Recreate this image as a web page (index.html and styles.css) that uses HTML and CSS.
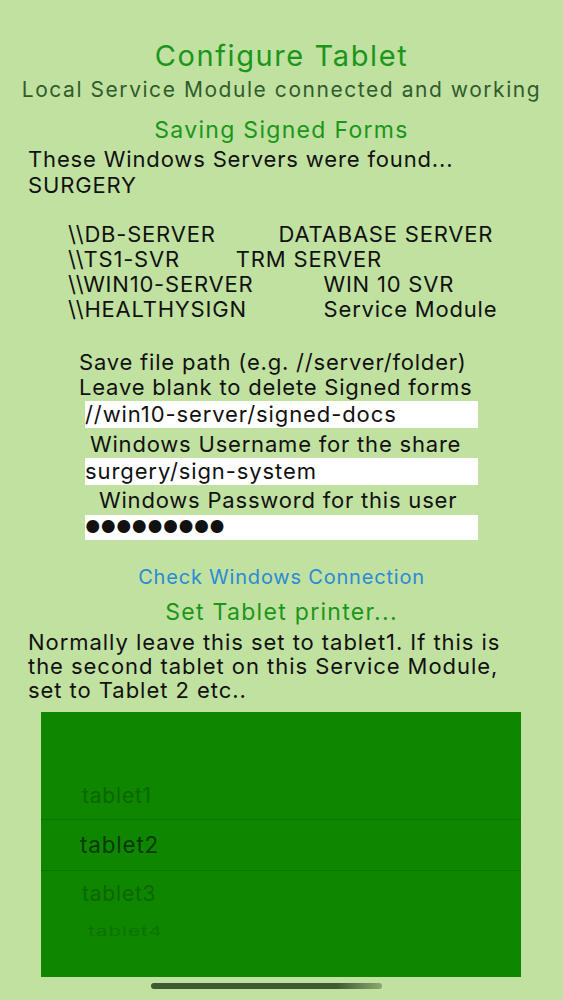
FILE: index.html
```html
<!DOCTYPE html>
<html lang="en">
<head>
    <meta charset="UTF-8">
    <meta name="viewport" content="width=device-width, initial-scale=1.0">
    <title>Configure Tablet</title>
    <link rel="stylesheet" href="styles.css">
</head>
<body>
  <div class="screen">
    <h1 class="title">Configure Tablet</h1>
    <p class="status">Local Service Module connected and working</p>

    <h2 class="section">Saving Signed Forms</h2>
    <p class="found">These Windows Servers were found...<br>SURGERY</p>

    <ul class="servers">
        <li>\\DB-SERVER         DATABASE SERVER</li>
        <li>\\TS1-SVR        TRM SERVER</li>
        <li>\\WIN10-SERVER          WIN 10 SVR</li>
        <li>\\HEALTHYSIGN           Service Module</li>
    </ul>

    <div class="share-form">
        <p class="label label-path">Save file path (e.g. //server/folder)<br>Leave blank to delete Signed forms</p>
        <div class="field">//win10-server/signed-docs</div>
        <p class="label label-user">Windows Username for the share</p>
        <div class="field">surgery/sign-system</div>
        <p class="label label-pass">Windows Password for this user</p>
        <div class="field field-pass">●●●●●●●●●</div>
    </div>

    <a class="check-link" href="#">Check Windows Connection</a>

    <h2 class="section section-printer">Set Tablet printer...</h2>
    <p class="note">Normally leave this set to tablet1. If this is<br>the second tablet on this Service Module,<br>set to Tablet 2 etc..</p>

    <div class="picker">
        <div class="picker-row row-far">tablet1</div>
        <div class="picker-row row-selected">tablet2</div>
        <div class="picker-row row-far">tablet3</div>
        <div class="picker-row row-farther">tablet4</div>
    </div>

    <div class="home-bar"></div>
  </div>
</body>
</html>
```

FILE: styles.css
```css
body{
    margin: 0;
    background-color: #c1e1a1;
    font-family: Inter, "Noto Sans", sans-serif;
    color: #111;
}

.screen{
    width: 563px;
    height: 1000px;
    padding-top: 38px;
    box-sizing: border-box;
    overflow: hidden;
}

p{
    margin: 0;
}

.title{
    margin: 0;
    text-align: center;
    font-size: 29px;
    font-weight: 400;
    letter-spacing: 1.6px;
    line-height: 36px;
    color: #1a961a;
}

.status{
    margin-top: 1px;
    text-align: center;
    font-size: 21px;
    letter-spacing: 1.55px;
    line-height: 30px;
    color: #305c2c;
}

.section{
    margin: 11px 0 0;
    text-align: center;
    font-size: 23px;
    font-weight: 400;
    letter-spacing: 1.3px;
    line-height: 28px;
    color: #1a961a;
}

.found{
    margin-top: 2px;
    padding-left: 28px;
    font-size: 22px;
    letter-spacing: 0.85px;
    line-height: 26px;
}

.servers{
    list-style: none;
    margin: 24px 0 0;
    padding-left: 68px;
    font-size: 22px;
    letter-spacing: 0.8px;
    line-height: 25px;
}

.servers li{
    white-space: pre;
}

.share-form{
    margin: 28px 0 0 85px;
    width: 393px;
}

.label{
    font-size: 22px;
    letter-spacing: 0.8px;
    line-height: 25px;
}

.label-path{
    margin-left: -6px;
    white-space: nowrap;
}

.label-user{
    margin: 4px 0 0 5px;
    white-space: nowrap;
}

.label-pass{
    margin: 3px 0 0 14px;
    white-space: nowrap;
}

.field{
    margin-top: 1px;
    height: 27px;
    background: #fff;
    font-size: 22px;
    letter-spacing: 0.9px;
    line-height: 27px;
    white-space: nowrap;
    overflow: hidden;
}

.field-pass{
    margin-top: 2px;
    font-size: 17px;
    letter-spacing: 0;
    height: 25px;
    line-height: 25px;
}

.check-link{
    display: block;
    margin-top: 24px;
    text-align: center;
    font-size: 20px;
    letter-spacing: 0.8px;
    line-height: 26px;
    color: #2a8ad6;
    text-decoration: none;
}

.section-printer{
    margin-top: 8px;
}

.note{
    margin-top: 4px;
    padding-left: 28px;
    font-size: 22px;
    letter-spacing: 0.95px;
    line-height: 24px;
    white-space: nowrap;
}

.picker{
    margin: 10px 0 0 41px;
    width: 480px;
    height: 265px;
    background: #0e8600;
    padding-top: 61px;
    box-sizing: border-box;
}

.picker-row{
    padding-left: 41px;
    font-size: 21px;
    letter-spacing: 0.8px;
    color: #0c5a05;
    opacity: 0.7;
    height: 46px;
    line-height: 46px;
}

.row-selected{
    padding-left: 39px;
    font-size: 22.5px;
    color: #063a00;
    opacity: 1;
    border-top: 1px solid #0b7500;
    border-bottom: 1px solid #0b7500;
    height: 50px;
    line-height: 50px;
}

.row-farther{
    height: 28px;
    line-height: 28px;
    padding-left: 47px;
    transform: scaleY(0.65);
    opacity: 0.45;
}

.home-bar{
    width: 231px;
    height: 6px;
    margin: 6px 0 0 151px;
    border-radius: 3px;
    background: linear-gradient(to right, #3d5a30, #3d5a30 80%, #8aa870);
}
```
